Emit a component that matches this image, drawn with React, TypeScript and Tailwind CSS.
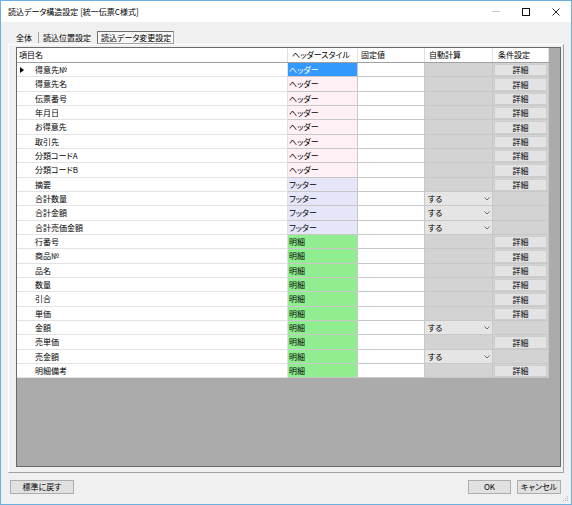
import React from 'react';

type Kind = 'h' | 'f' | 'm';
type Row = { name: string; kind: Kind; calc: boolean };

const rows: Row[] = [
  { name: '得意先№', kind: 'h', calc: false },
  { name: '得意先名', kind: 'h', calc: false },
  { name: '伝票番号', kind: 'h', calc: false },
  { name: '年月日', kind: 'h', calc: false },
  { name: 'お得意先', kind: 'h', calc: false },
  { name: '取引先', kind: 'h', calc: false },
  { name: '分類コードA', kind: 'h', calc: false },
  { name: '分類コードB', kind: 'h', calc: false },
  { name: '摘要', kind: 'f', calc: false },
  { name: '合計数量', kind: 'f', calc: true },
  { name: '合計金額', kind: 'f', calc: true },
  { name: '合計売価金額', kind: 'f', calc: true },
  { name: '行番号', kind: 'm', calc: false },
  { name: '商品№', kind: 'm', calc: false },
  { name: '品名', kind: 'm', calc: false },
  { name: '数量', kind: 'm', calc: false },
  { name: '引合', kind: 'm', calc: false },
  { name: '単価', kind: 'm', calc: false },
  { name: '金額', kind: 'm', calc: true },
  { name: '売単価', kind: 'm', calc: false },
  { name: '売金額', kind: 'm', calc: true },
  { name: '明細備考', kind: 'm', calc: false },
];

const kindLabel: Record<Kind, string> = { h: 'ヘッダー', f: 'フッター', m: '明細' };
const kindBg: Record<Kind, string> = { h: 'bg-[#fff0f5]', f: 'bg-[#e6e6fa]', m: 'bg-[#90ee90]' };

function Chevron() {
  return (
    <svg width="6" height="4" viewBox="0 0 6 4">
      <polyline points="0.5,0.5 3,3 5.5,0.5" fill="none" stroke="#606060" strokeWidth="0.9" />
    </svg>
  );
}

function DataRow({ row, index }: { row: Row; index: number }) {
  const h = index % 3 === 1 ? 'h-[15px]' : 'h-[14px]';
  const selected = index === 0;
  return (
    <div className={`flex ${h}`}>
      <div className="w-[271px] h-full bg-white border-r border-b border-r-[#e0e0e0] border-b-[#e3e3e3] flex items-center">
        <div className="w-[18px] h-full flex items-center pl-[3px]">
          {selected && (
            <svg width="4" height="6" viewBox="0 0 4 6">
              <polygon points="0,0 4,3 0,6" fill="#000" />
            </svg>
          )}
        </div>
        <span>{row.name}</span>
      </div>
      <div
        className={`w-[70px] h-full border-r border-b border-[#c8c8c8] flex items-center pl-[1px] ${
          selected ? 'bg-[#3399ff] text-white' : kindBg[row.kind]
        }`}
      >
        {kindLabel[row.kind]}
      </div>
      <div className="w-[67px] h-full bg-white border-r border-b border-[#c8c8c8]" />
      <div className="w-[68px] h-full bg-[#d3d3d3] border-r border-b border-[#c8c8c8] flex">
        {row.calc && (
          <div className="flex-1 h-full bg-[#e5e5e5] flex items-stretch">
            <div className="flex-1 flex items-center pl-[3px]">する</div>
            <div className="w-[11px] flex items-center justify-center">
              <Chevron />
            </div>
          </div>
        )}
      </div>
      <div className="w-[56px] h-full bg-[#d3d3d3] border-r border-b border-[#c8c8c8] flex px-px pt-px">
        {!row.calc && (
          <div className="flex-1 h-full bg-[#e3e3e3] border border-[#cdcdcd] flex items-center justify-center">
            詳細
          </div>
        )}
      </div>
    </div>
  );
}

export default function App() {
  return (
    <div className="relative w-[572px] h-[505px] border border-[#6cb0e0] bg-[#f0f0f0] flex flex-col overflow-hidden text-[8px] leading-none text-black font-['Noto_Sans_CJK_JP','Noto_Sans',sans-serif] [font-feature-settings:'palt']">
      {/* Title bar */}
      <div className="h-[21px] bg-white flex items-center">
        <span className="pl-[7px]">読込データ構造設定 [統一伝票C様式]</span>
        <div className="ml-auto flex h-full">
          <div className="w-[30px] h-full flex items-center justify-center">
            <svg width="8" height="1" viewBox="0 0 8 1">
              <rect x="0" y="0" width="8" height="1" fill="#c4c4c4" />
            </svg>
          </div>
          <div className="w-[30px] h-full flex items-center justify-center">
            <svg width="8" height="8" viewBox="0 0 8 8">
              <rect x="0.5" y="0.5" width="7" height="7" fill="none" stroke="#111" strokeWidth="1" />
            </svg>
          </div>
          <div className="w-[30px] h-full flex items-center justify-center">
            <svg width="8" height="8" viewBox="0 0 8 8">
              <path d="M0.5 0.5 L7.5 7.5 M7.5 0.5 L0.5 7.5" stroke="#111" strokeWidth="0.9" />
            </svg>
          </div>
        </div>
      </div>

      {/* Tabs */}
      <div className="pt-[9px] h-[22px] flex items-stretch pl-[15px]">
        <div className="w-[22px] flex items-center">全体</div>
        <div className="w-px h-[11px] self-center bg-[#a0a0a0]" />
        <div className="ml-[4px] w-[50px] flex items-center">読込位置設定</div>
        <div className="ml-[4px] w-[77px] border border-t-[#707070] border-l-[#707070] border-r-[#a0a0a0] border-b-[#a0a0a0] bg-[#f7f7f7] flex items-center pl-[3px]">
          読込データ変更設定
        </div>
      </div>

      {/* Tab panel */}
      <div className="ml-[7px] w-[556px] h-[429px] border border-t-white border-l-white border-r-[#a0a0a0] border-b-[#a0a0a0] pl-[7px] pt-[2px]">
        <div className="w-[545px] h-[420px] border border-[#696969] bg-[#ababab]">
          <div className="w-[532px]">
            {/* Header */}
            <div className="flex h-[15px] bg-white border-b border-[#a0a0a0]">
              <div className="w-[271px] h-full border-r border-[#e0e0e0] flex items-center pl-[2px]">項目名</div>
              <div className="w-[70px] h-full border-r border-[#e0e0e0] flex items-center pl-[4px]">ヘッダースタイル</div>
              <div className="w-[67px] h-full border-r border-[#e0e0e0] flex items-center pl-[3px]">固定値</div>
              <div className="w-[68px] h-full border-r border-[#e0e0e0] flex items-center pl-[4px]">自動計算</div>
              <div className="w-[56px] h-full border-r border-[#e0e0e0] flex items-center pl-[5px]">条件設定</div>
            </div>
            {rows.map((r, i) => (
              <DataRow key={r.name} row={r} index={i} />
            ))}
          </div>
        </div>
      </div>

      {/* Bottom buttons */}
      <div className="mt-[7px] flex justify-between pl-[9px] pr-[10px]">
        <div className="w-[64px] h-[14px] bg-[#e1e1e1] border border-[#adadad] flex items-center justify-center">
          標準に戻す
        </div>
        <div className="flex gap-[6px]">
          <div className="w-[43px] h-[14px] bg-[#e1e1e1] border border-[#adadad] flex items-center justify-center">
            OK
          </div>
          <div className="w-[44px] h-[14px] bg-[#e1e1e1] border border-[#adadad] flex items-center justify-center">
            キャンセル
          </div>
        </div>
      </div>

      {/* Resize grip */}
      <svg className="absolute right-[2px] bottom-[2px]" width="7" height="7" viewBox="0 0 7 7">
        <rect x="5" y="1" width="1" height="1" fill="#b8b8b8" />
        <rect x="3" y="3" width="1" height="1" fill="#b8b8b8" />
        <rect x="5" y="3" width="1" height="1" fill="#b8b8b8" />
        <rect x="1" y="5" width="1" height="1" fill="#b8b8b8" />
        <rect x="3" y="5" width="1" height="1" fill="#b8b8b8" />
        <rect x="5" y="5" width="1" height="1" fill="#b8b8b8" />
      </svg>
    </div>
  );
}
